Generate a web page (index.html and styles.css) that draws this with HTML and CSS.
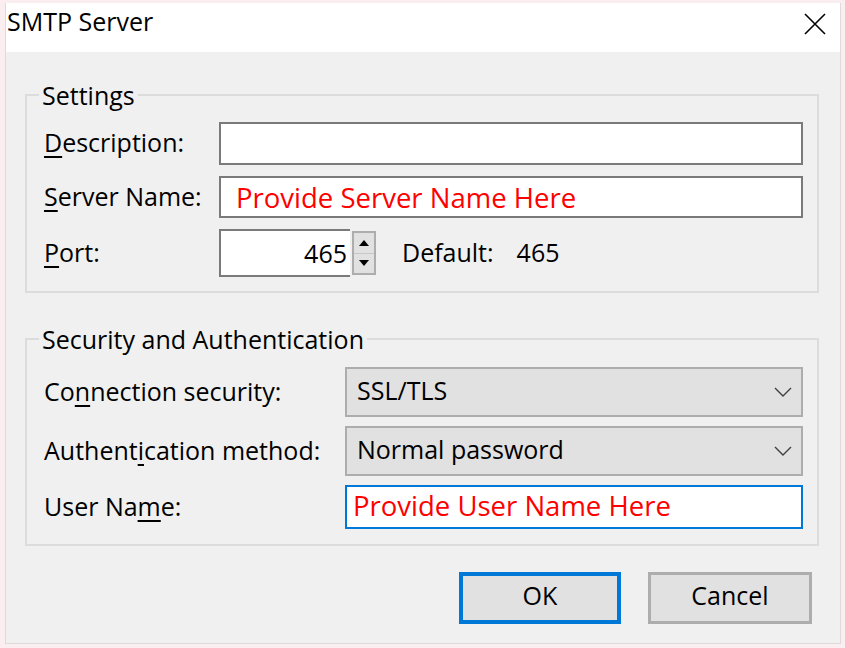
FILE: index.html
```html
<!DOCTYPE html>
<html>
    <head>
        <title>SMTP Server</title>
        <link rel="stylesheet" href="styles.css">
    </head>
    <body>
        <div class="window">
            <div class="titlebar">
                <span class="title">SMTP Server</span>
                <svg class="close" width="22" height="22" viewBox="0 0 22 22">
                    <path d="M1 1 L21 21 M21 1 L1 21" stroke="#000" stroke-width="1.6" fill="none"/>
                </svg>
            </div>
            <div class="content">
                <fieldset class="group">
                    <legend>Settings</legend>
                    <div class="rows settings">
                        <span class="label"><u>D</u>escription:</span>
                        <div class="text desc"></div>

                        <span class="label"><u>S</u>erver Name:</span>
                        <div class="text server"><span class="hint">Provide Server Name Here</span></div>

                        <span class="label"><u>P</u>ort:</span>
                        <div class="port-row">
                            <div class="text port">465</div>
                            <div class="spinner">
                                <div class="spin up">
                                    <svg width="10" height="6" viewBox="0 0 10 6"><path d="M5 0 L10 6 L0 6 Z" fill="#000"/></svg>
                                </div>
                                <div class="spin down">
                                    <svg width="10" height="6" viewBox="0 0 10 6"><path d="M0 0 L10 0 L5 6 Z" fill="#000"/></svg>
                                </div>
                            </div>
                            <span class="default">Default:</span>
                            <span class="default-value">465</span>
                        </div>
                    </div>
                </fieldset>

                <fieldset class="group security">
                    <legend>Security and Authentication</legend>
                    <div class="rows auth">
                        <span class="label">Co<u>n</u>nection security:</span>
                        <div class="select">
                            <span class="choice">SSL/TLS</span>
                            <svg width="18" height="10" viewBox="0 0 18 10"><path d="M1 1 L9 9 L17 1" stroke="#404040" stroke-width="1.4" fill="none"/></svg>
                        </div>

                        <span class="label">Authent<u>i</u>cation method:</span>
                        <div class="select">
                            <span class="choice">Normal password</span>
                            <svg width="18" height="10" viewBox="0 0 18 10"><path d="M1 1 L9 9 L17 1" stroke="#404040" stroke-width="1.4" fill="none"/></svg>
                        </div>

                        <span class="label">User Na<u>m</u>e:</span>
                        <div class="text user"><span class="hint">Provide User Name Here</span></div>
                    </div>
                </fieldset>

                <div class="buttons">
                    <button class="ok">OK</button>
                    <button class="cancel">Cancel</button>
                </div>
            </div>
        </div>
    </body>
</html>
```

FILE: styles.css
```css
body{
    margin: 0;
    background-color: rgb(250, 238, 241);
    font-family: "Open Sans", "Noto Sans", sans-serif;
    font-size: 25px;
    color: #000;
}
u{
    text-decoration-thickness: 2px;
    text-underline-offset: 4px;
}
.window{
    margin: 3px 4px 0 5px;
    width: 836px;
    height: 641px;
    box-sizing: border-box;
    border: 1px solid #dedada;
    border-top: none;
    background-color: #f0f0f0;
    display: flex;
    flex-direction: column;
}
.titlebar{
    height: 49px;
    flex-shrink: 0;
    background-color: #fff;
    display: flex;
    justify-content: space-between;
    align-items: flex-start;
    padding: 0 14px 0 1px;
}
.title{
    line-height: 30px;
    margin-top: 3px;
}
.close{
    margin-top: 10px;
}
.content{
    padding: 28px 21px 0 19px;
}
.group{
    margin: 0;
    min-width: 0;
    border: 2px solid #dcdcdc;
    padding: 12px 14px 14px 17px;
}
.group legend{
    padding: 0 3px;
    margin-left: -5px;
    line-height: 30px;
}
.security{
    margin-top: 31px;
    padding-top: 13px;
    padding-bottom: 15px;
}
.rows{
    display: grid;
    align-items: center;
}
.settings{
    grid-template-columns: 175px 1fr;
    grid-template-rows: 43px 42px 48px;
    row-gap: 11px;
}
.auth{
    grid-template-columns: 301px 1fr;
    grid-template-rows: 50px 50px 44px;
    row-gap: 9px;
}
.label{
    line-height: 30px;
    white-space: nowrap;
    margin-top: -3px;
}
.text{
    height: 100%;
    box-sizing: border-box;
    background-color: #fff;
    border: 2px solid #7a7a7a;
    display: flex;
    align-items: center;
}
.hint{
    color: #ff0000;
    font-size: 27.5px;
}
.server{
    padding-left: 15px;
}
.user{
    border-color: #0078d7;
    padding-left: 6px;
    padding-bottom: 4px;
}
.port-row{
    height: 100%;
    display: flex;
    align-items: center;
}
.port{
    width: 131px;
    border-right: none;
    justify-content: flex-end;
    padding-right: 3px;
}
.spinner{
    width: 24px;
    height: 44px;
    box-sizing: border-box;
    margin-left: 2px;
    border: 2px solid #adadad;
    background-color: #e1e1e1;
    display: flex;
    flex-direction: column;
}
.spin{
    flex: 1;
    display: flex;
    align-items: center;
    justify-content: center;
}
.spin.up{
    border-bottom: 1px solid #c8c8c8;
}
.default{
    margin-left: 26px;
    margin-top: -3px;
}
.default-value{
    margin-left: 23px;
    margin-top: -3px;
}
.select{
    height: 100%;
    box-sizing: border-box;
    background-color: #e1e1e1;
    border: 2px solid #adadad;
    display: flex;
    justify-content: space-between;
    align-items: center;
    padding: 0 9px 0 10px;
}
.choice{
    margin-top: -4px;
}
.buttons{
    display: flex;
    justify-content: flex-end;
    column-gap: 27px;
    padding-right: 7px;
    margin-top: 26px;
}
button{
    font-family: inherit;
    font-size: 25px;
    color: #000;
    height: 52px;
    box-sizing: border-box;
    background-color: #e1e1e1;
    padding: 0 0 6px 0;
    cursor: pointer;
}
.ok{
    width: 162px;
    border: 4px solid #0078d7;
}
.cancel{
    width: 164px;
    border: 3px solid #adadad;
}
```
